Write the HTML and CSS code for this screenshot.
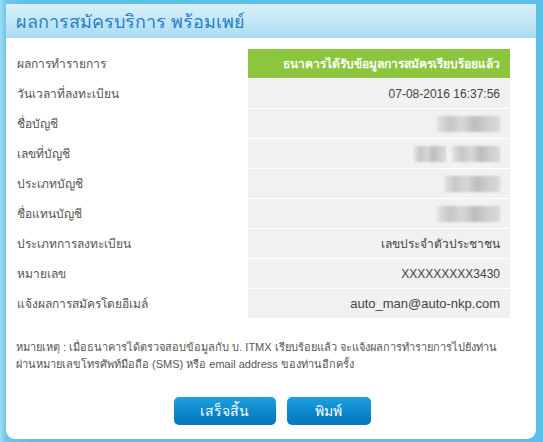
FILE: index.html
```html
<!DOCTYPE html>
<html lang="th">
<head>
<meta charset="utf-8">
<title>ผลการสมัครบริการ พร้อมเพย์</title>
<link rel="stylesheet" href="styles.css">
</head>
<body>
<div class="frame">
  <div class="panel">
    <div class="header"><h1 class="title">ผลการสมัครบริการ พร้อมเพย์</h1></div>
    <div class="content">
      <div class="table">
        <div class="row"><div class="label">ผลการทำรายการ</div><div class="value value-ok">ธนาคารได้รับข้อมูลการสมัครเรียบร้อยแล้ว</div></div>
        <div class="row"><div class="label">วันเวลาที่ลงทะเบียน</div><div class="value">07-08-2016 16:37:56</div></div>
        <div class="row"><div class="label">ชื่อบัญชี</div><div class="value"><span class="blur blur-a"></span></div></div>
        <div class="row"><div class="label">เลขที่บัญชี</div><div class="value"><span class="blur blur-b"></span><span class="blur blur-c"></span></div></div>
        <div class="row"><div class="label">ประเภทบัญชี</div><div class="value"><span class="blur blur-d"></span></div></div>
        <div class="row"><div class="label">ชื่อแทนบัญชี</div><div class="value"><span class="blur blur-e"></span></div></div>
        <div class="row"><div class="label">ประเภทการลงทะเบียน</div><div class="value">เลขประจำตัวประชาชน</div></div>
        <div class="row"><div class="label">หมายเลข</div><div class="value">XXXXXXXXX3430</div></div>
        <div class="row"><div class="label">แจ้งผลการสมัครโดยอีเมล์</div><div class="value value-mail">auto_man@auto-nkp.com</div></div>
      </div>
      <p class="note">หมายเหตุ : เมื่อธนาคารได้ตรวจสอบข้อมูลกับ บ. ITMX เรียบร้อยแล้ว จะแจ้งผลการทำรายการไปยังท่าน<br>ผ่านหมายเลขโทรศัพท์มือถือ (SMS) หรือ email address ของท่านอีกครั้ง</p>
      <div class="actions">
        <button class="btn btn-done">เสร็จสิ้น</button>
        <button class="btn btn-print">พิมพ์</button>
      </div>
    </div>
  </div>
</div>
</body>
</html>
```
FILE: styles.css
```css
* { box-sizing: border-box; }
html, body { margin: 0; padding: 0; }
body {
  width: 543px;
  height: 442px;
  overflow: hidden;
  font-family: Tahoma, "Liberation Sans", "DejaVu Sans", sans-serif;
  background: #5cbfe8;
}
.frame {
  height: 442px;
  padding: 4px 7px 3px 6px;
  background: linear-gradient(to right, #9fdcf4 0px, #6cc6ec 6px, #5cbfe8 30px, #5cbfe8 100%);
}
.panel {
  height: 435px;
  background: #fff;
  border-radius: 0 0 9px 9px;
  display: flex;
  flex-direction: column;
}
.header {
  height: 34px;
  background: linear-gradient(to bottom, #d9f0fa 0%, #c3e7f7 50%, #a9dbf2 100%);
  padding: 0 0 0 10px;
  display: flex;
  align-items: center;
}
.title {
  margin: 0;
  font-size: 18px;
  font-weight: normal;
  color: #2580c8;
}
.content {
  padding: 11px 26px 0 10px;
  flex: 1;
  display: flex;
  flex-direction: column;
}
.table { display: flex; flex-direction: column; }
.row {
  display: grid;
  grid-template-columns: 232px 262px;
  height: 30px;
}
.row:first-child { height: 29px; }
.label {
  font-size: 12px;
  color: #555;
  display: flex;
  align-items: center;
  padding-left: 1px;
}
.value {
  background: #f1f1f1;
  border-top: 1px solid #fff;
  font-size: 12px;
  color: #444;
  display: flex;
  align-items: center;
  justify-content: flex-end;
  padding-right: 10px;
  gap: 6px;
}
.value-mail { font-size: 13px; }
.row:first-child .value { border-top: 0; }
.value-ok {
  background: #8cc63e;
  color: #fff;
  font-weight: bold;
}
.blur {
  display: inline-block;
  height: 16px;
  background: linear-gradient(to right, #e4e4e4, #c6c6c6 20%, #d8d8d8 40%, #bdbdbd 60%, #cfcfcf 80%, #dadada);
  filter: blur(1px);
}
.blur-a { width: 63px; }
.blur-b { width: 32px; }
.blur-c { width: 48px; }
.blur-d { width: 56px; }
.blur-e { width: 63px; }
.note {
  margin: 21px 0 0 0;
  font-size: 11px;
  line-height: 17px;
  color: #555;
  white-space: nowrap;
}
.actions {
  display: flex;
  justify-content: center;
  gap: 11px;
  margin-top: 24px;
  padding-left: 18px;
}
.btn {
  height: 28px;
  border: 0;
  border-radius: 5px;
  background: linear-gradient(to bottom, #1ea2df 0%, #0a86cc 55%, #0776be 100%);
  color: #fff;
  font-family: inherit;
  font-size: 14px;
  font-weight: normal;
  padding: 0;
}
.btn-done { width: 102px; }
.btn-print { width: 84px; }
```
